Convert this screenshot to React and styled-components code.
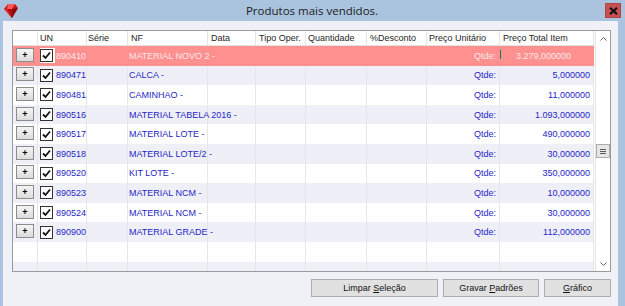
import React from 'react';
import styled, { createGlobalStyle } from 'styled-components';

var GlobalStyle = createGlobalStyle`
  html, body {
    margin: 0;
    padding: 0;
    background: #aac4df;
  }
  body {
    font-family: "Liberation Sans", Arial, sans-serif;
  }
`;

var Window = styled.div`
  width: 625px;
  height: 306px;
  display: flex;
  flex-direction: column;
  background: #aac4df;
  overflow: hidden;
`;
var TitleBar = styled.div`
  height: 21px;
  display: grid;
  grid-template-columns: 1fr auto 1fr;
  align-items: center;
  padding: 0 4px 0 3px;
`;
var Title = styled.div`
  font-family: "Open Sans", "Liberation Sans", sans-serif;
  font-size: 11.5px;
  color: #1b1b1b;
`;
var CloseButton = styled.div`
  justify-self: end;
  width: 16px;
  height: 15px;
  box-sizing: border-box;
  background: #c75050;
  border: 1px solid #b04444;
  display: flex;
  align-items: center;
  justify-content: center;
`;
var Body = styled.div`
  flex: 1;
  margin: 0 7px 0 3px;
  background: #f0f1f7;
  padding: 9px 7px 0 9px;
  display: flex;
  flex-direction: column;
`;
var Table = styled.div`
  width: 599px;
  height: 242px;
  box-sizing: border-box;
  border: 1px solid #9a9a9a;
  background: #fff;
  display: flex;
`;
var DataArea = styled.div`
  flex: 1;
  overflow: hidden;
  display: flex;
  flex-direction: column;
`;
var COLS = '25px 49px 41px 80px 48px 50px 61px 60px 73px 94px';
var HeaderRow = styled.div`
  display: grid;
  grid-template-columns: ${COLS};
  height: 15px;
  box-sizing: border-box;
  border-bottom: 1px solid #e2e2e2;
  background: #fff;
`;
var HeaderCell = styled.div`
  box-sizing: border-box;
  border-right: 1px solid #e4e4e4;
  padding-left: ${(p) => p.$pad || 2}px;
  font-size: 9px;
  line-height: 14px;
  color: #262626;
  white-space: nowrap;
  overflow: hidden;
`;
var Row = styled.div`
  display: grid;
  grid-template-columns: ${COLS};
  flex: 0 0 19.6px;
  background: ${(p) => (p.$selected ? '#ff9090' : p.$shaded ? '#eff0f7' : '#fff')};
  color: ${(p) => (p.$selected ? '#ffe6e6' : '#2626c6')};
  --line: ${(p) => (p.$selected ? 'transparent' : '#e6e6e6')};
  font-size: 9px;
`;
var Cell = styled.div`
  box-sizing: border-box;
  border-right: 1px solid var(--line);
  display: flex;
  align-items: center;
  justify-content: ${(p) => (p.$right ? 'flex-end' : 'flex-start')};
  padding: 0 ${(p) => (p.$right ? 3 : 0)}px 0 ${(p) => p.$padLeft || 0}px;
  white-space: nowrap;
  min-width: 0;
`;
var PlusButton = styled.div`
  width: 18px;
  height: 14px;
  box-sizing: border-box;
  margin-left: 3px;
  margin-top: -2px;
  border: 1px solid #8c8c8c;
  background: linear-gradient(#f4f4f4, #dcdcdc);
  color: #000;
  font-size: 9px;
  font-weight: bold;
  display: flex;
  align-items: center;
  justify-content: center;
`;
var CheckHolder = styled.div`
  display: flex;
  align-items: center;
  padding: 1px 2px 1px 0;
  margin: 0 1px 0 2px;
  background: ${(p) => (p.$selected ? '#fff' : 'transparent')};
`;
var CheckBox = styled.div`
  width: 13px;
  height: 13px;
  box-sizing: border-box;
  border: 1px solid #333;
  background: #fff;
  display: flex;
  align-items: center;
  justify-content: center;
`;
var Editor = styled.div`
  display: flex;
  align-items: center;
  gap: 15px;
  width: 100%;
`;
var Caret = styled.div`
  width: 1px;
  height: 9px;
  margin-top: -3px;
  background: #1f6f6f;
`;
var ScrollBar = styled.div`
  width: 14px;
  margin-left: 1px;
  border-left: 1px solid #e4e4e4;
  background: #fff;
  display: flex;
  flex-direction: column;
`;
var ScrollArrow = styled.div`
  height: 15px;
  display: flex;
  align-items: center;
  justify-content: center;
`;
var Track = styled.div`
  flex: 1;
  display: flex;
  flex-direction: column;
`;
var Thumb = styled.div`
  height: 14px;
  box-sizing: border-box;
  border: 1px solid #acacac;
  background: #e6e6e6;
  display: flex;
  flex-direction: column;
  align-items: center;
  justify-content: center;
  gap: 1px;
`;
var GripLine = styled.div`
  width: 6px;
  height: 1px;
  background: #5a5a5a;
`;
var ButtonBar = styled.div`
  display: flex;
  justify-content: flex-end;
  gap: 5px;
  margin-top: 7px;
  width: 599px;
`;
var Button = styled.div`
  width: ${(p) => p.$w}px;
  height: 18px;
  box-sizing: border-box;
  border: 1px solid #adadad;
  background: #e1e1e1;
  font-size: 9px;
  color: #111;
  display: flex;
  align-items: center;
  justify-content: center;
  u { text-decoration: underline; }
`;

var rows = [
  ['890410', 'MATERIAL NOVO 2 -', '3.279,000000'],
  ['890471', 'CALCA -', '5,000000'],
  ['890481', 'CAMINHAO -', '11,000000'],
  ['890516', 'MATERIAL TABELA 2016 -', '1.093,000000'],
  ['890517', 'MATERIAL LOTE -', '490,000000'],
  ['890518', 'MATERIAL LOTE/2 -', '30,000000'],
  ['890520', 'KIT LOTE -', '350,000000'],
  ['890523', 'MATERIAL NCM -', '10,000000'],
  ['890524', 'MATERIAL NCM -', '30,000000'],
  ['890900', 'MATERIAL GRADE -', '112,000000'],
];

var headers = [['', 2], ['UN', 2], ['Série', 1], ['NF', 3], ['Data', 3], ['Tipo Oper.', 3], ['Quantidade', 2], ['%Desconto', 3], ['Preço Unitário', 2], ['Preço Total Item', 3]];

var Gem = () => (
  <svg width="16" height="16" viewBox="0 0 16 16">
    <polygon points="1,6 5,1 12,1 15,5 9,15" fill="#c81414" />
    <polygon points="5,1 12,1 9,6 4,6" fill="#ff5a5a" />
    <polygon points="1,6 4,6 9,15" fill="#e83030" />
    <polygon points="9,6 15,5 9,15" fill="#8e0a0a" />
    <polygon points="4,6 9,6 9,15" fill="#b01010" />
  </svg>
);

var Check = () => (
  <svg width="9" height="9" viewBox="0 0 9 9">
    <polyline points="1,4.5 3.5,7 8,1.5" fill="none" stroke="#111" strokeWidth="1.8" />
  </svg>
);

var Chevron = ({ down }) => (
  <svg width="7" height="4" viewBox="0 0 7 4">
    <polyline points={down ? '0.5,0.5 3.5,3.5 6.5,0.5' : '0.5,3.5 3.5,0.5 6.5,3.5'} fill="none" stroke="#606060" strokeWidth="1" />
  </svg>
);

var EmptyRow = ({ shaded }) => (
  <Row $shaded={shaded}>
    {headers.map((h, i) => <Cell key={i} />)}
  </Row>
);

var App = () => {
  var trackHeight = 212;
  var scrollRatio = 0.46;
  var thumbTop = Math.round(trackHeight * scrollRatio);

  return (<Window>
    <GlobalStyle />
    <TitleBar>
      <Gem />
      <Title>Produtos mais vendidos.</Title>
      <CloseButton>
        <svg width="9" height="8" viewBox="0 0 9 8">
          <path d="M1 0.8 L8 7.2 M8 0.8 L1 7.2" stroke="#111" strokeWidth="2.2" />
        </svg>
      </CloseButton>
    </TitleBar>
    <Body>
      <Table>
        <DataArea>
          <HeaderRow>
            {headers.map((h, i) => <HeaderCell key={i} $pad={h[1]}>{h[0]}</HeaderCell>)}
          </HeaderRow>
          {rows.map((r, i) => {
            var sel = i === 0;
            return (<Row key={r[0]} $selected={sel} $shaded={i % 2 === 1}>
              <Cell><PlusButton>+</PlusButton></Cell>
              <Cell>
                <CheckHolder $selected={sel}><CheckBox><Check /></CheckBox></CheckHolder>
                {r[0]}
              </Cell>
              <Cell />
              <Cell $padLeft={1}>{r[1]}</Cell>
              <Cell />
              <Cell />
              <Cell />
              <Cell />
              <Cell $right>Qtde:</Cell>
              {sel
                ? <Cell><Editor><Caret />{r[2]}</Editor></Cell>
                : <Cell $right>{r[2]}</Cell>}
            </Row>);
          })}
          <EmptyRow />
          <EmptyRow shaded />
        </DataArea>
        <ScrollBar>
          <ScrollArrow><Chevron /></ScrollArrow>
          <Track>
            <Thumb style={{ marginTop: thumbTop }}>
              <GripLine /><GripLine /><GripLine />
            </Thumb>
          </Track>
          <ScrollArrow><Chevron down /></ScrollArrow>
        </ScrollBar>
      </Table>
      <ButtonBar>
        <Button $w={127}>Limpar&nbsp;<u>S</u>eleção</Button>
        <Button $w={96}>Gravar&nbsp;<u>P</u>adrões</Button>
        <Button $w={67}><u>G</u>ráfico</Button>
      </ButtonBar>
    </Body>
  </Window>);
};

export default App;
